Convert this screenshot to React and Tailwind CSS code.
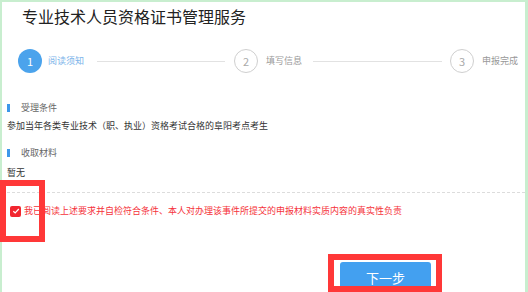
import React from "react";

const font = { fontFamily: '"Noto Sans CJK SC", "Noto Sans", sans-serif' };

function Step({ n, label, active, ml }) {
  return (
    <>
      <div
        className={
          "w-[24px] h-[24px] shrink-0 rounded-full flex items-center justify-center text-[11px] leading-none " +
          (active ? "bg-[#4ba3ec] text-white" : "border border-[#cfcfcf] text-[#aaa] bg-white") +
          " " + ml
        }
      >
        {n}
      </div>
      <span className={"text-[9px] leading-[12px] whitespace-nowrap " + (active ? "text-[#7cb4ea] ml-[6px]" : "text-[#999] ml-[8px]")}>
        {label}
      </span>
    </>
  );
}

function Header({ children, mt }) {
  return (
    <div className={"flex items-center h-[12px] " + mt}>
      <div className="w-[3px] h-[8px] bg-[#3d97ea] ml-[5px]" />
      <span className="ml-[11px] text-[9px] leading-[12px] text-[#666]">{children}</span>
    </div>
  );
}

export default function App() {
  return (
    <div className="relative w-[528px] h-[292px] overflow-hidden bg-[#c8eecf] pt-[2px] pl-[2px] pr-[3px]" style={font}>
      <div className="h-[300px] bg-white flex flex-col">
        <div className="pl-[20px] text-[16px] leading-[29px] h-[29px] text-[#222]">专业技术人员资格证书管理服务</div>

        <div className="flex items-center mt-[18px] pl-[16px] h-[24px]">
          <Step n="1" label="阅读须知" active ml="" />
          <div className="ml-[13px] w-[128px] h-px bg-[#e2e2e2]" />
          <Step n="2" label="填写信息" ml="ml-[9px]" />
          <div className="ml-[11px] w-[129px] h-px bg-[#e2e2e2]" />
          <Step n="3" label="申报完成" ml="ml-[8px]" />
        </div>

        <Header mt="mt-[29px]">受理条件</Header>
        <div className="mt-[6px] h-[12px] pl-[5px] text-[9px] leading-[12px] text-[#333] whitespace-nowrap">
          参加当年各类专业技术（职、执业）资格考试合格的阜阳考点考生
        </div>
        <Header mt="mt-[15px]">收取材料</Header>
        <div className="mt-[8px] h-[12px] pl-[5px] text-[9px] leading-[12px] text-[#333]">暂无</div>

        <div className="mt-[13px] border-t border-dashed border-[#dcdcdc]" />

        <div className="mt-[12px] h-[12px] flex items-center pl-[8px]">
          <div className="w-[11px] h-[11px] rounded-[2px] bg-[#f2262f] flex items-center justify-center">
            <svg width="8" height="8" viewBox="0 0 8 8">
              <path d="M1.3 4.2 L3.2 6 L6.8 2" stroke="white" strokeWidth="1.2" fill="none" />
            </svg>
          </div>
          <span className="ml-[3px] text-[9px] leading-[12px] text-[#f5333b] whitespace-nowrap">
            我已阅读上述要求并自检符合条件、本人对办理该事件所提交的申报材料实质内容的真实性负责
          </span>
        </div>

        <div className="mt-[45px] pl-[338px]">
          <button className="w-[91px] h-[30px] rounded-[3px] bg-[#43a0f0] text-white text-[13px] leading-none">下一步</button>
        </div>
      </div>

      <div className="absolute left-0 top-[180px] w-[45px] h-[62px] border-[6px] border-[#ff3838]" />
      <div className="absolute left-[328px] top-[254px] w-[114px] h-[38px] border-[6px] border-[#ff3838]" />
    </div>
  );
}
